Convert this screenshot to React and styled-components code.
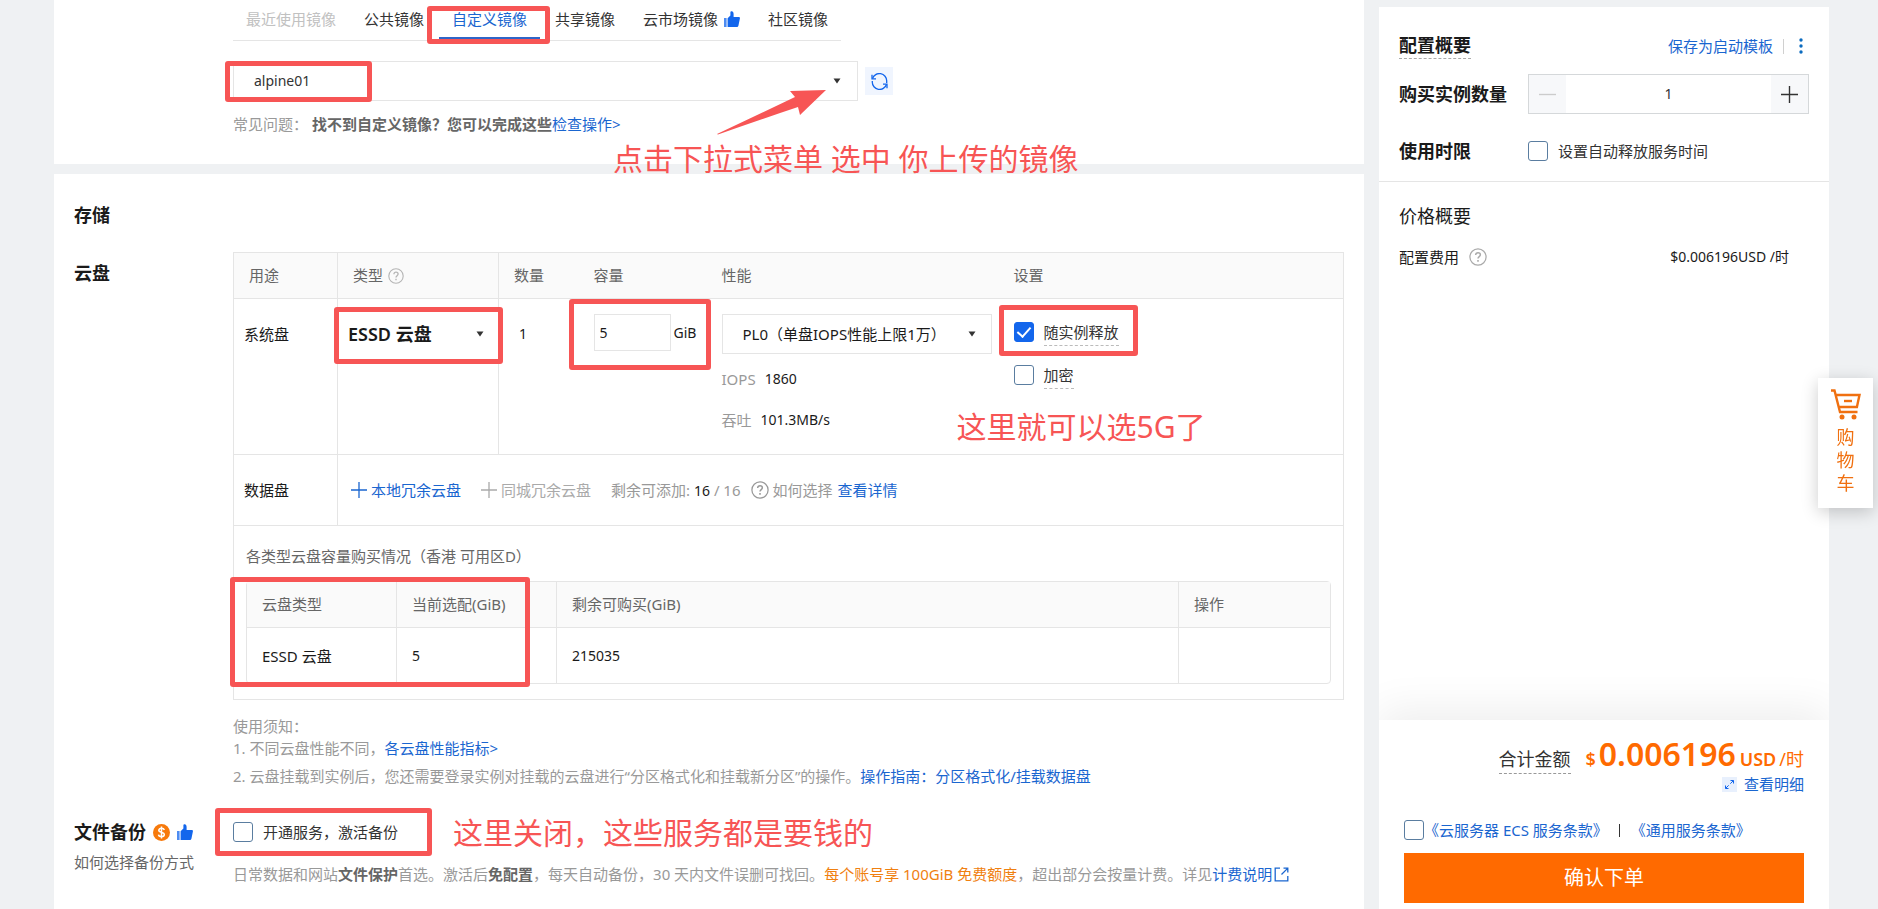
import React, { useState } from "react";
import styled, { createGlobalStyle, ThemeProvider } from "styled-components";

const theme = {
  bg: "#eff1f3",
  panel: "#ffffff",
  soft: "#fafafa",
  border: "#e5e5e5",
  text: "#333333",
  strong: "#1a1a1a",
  textMid: "#666666",
  textSoft: "#999999",
  link: "#1a66d0",
  primary: "#1366ec",
  orange: "#ff6a00",
  mark: "#f75555",
};

const GlobalStyle = createGlobalStyle`
  * {
    box-sizing: border-box;
  }
  body {
    margin: 0;
    background: ${theme.bg};
    color: ${theme.text};
    font-family: "Noto Sans", "Noto Sans CJK SC", sans-serif;
    font-size: 15px;
    line-height: 24px;
  }
  button, input, select {
    font: inherit;
    color: inherit;
  }
  h2, h3, p {
    margin: 0;
  }
`;

const Page = styled.div`
  display: flex;
  gap: 15px;
  min-height: 100vh;
  padding: 0 49px 0 54px;
`;

const Main = styled.main`
  flex: 1;
  min-width: 0;
  display: flex;
  flex-direction: column;
  gap: 10px;
`;

const Panel = styled.section`
  padding: ${({ $pad }) => $pad};
  flex: ${({ $grow }) => ($grow ? 1 : "none")};
  background: ${({ theme }) => theme.panel};
`;

const Row = styled.div`
  display: grid;
  grid-template-columns: 159px minmax(0, 1fr);
  margin-top: ${({ $top }) => $top || 0}px;
`;

const Heading = styled.h3`
  display: flex;
  align-items: center;
  gap: 7px;
  font-size: 18px;
  font-weight: ${({ $light }) => ($light ? 400 : 700)};
  line-height: 24px;
  color: ${({ theme }) => theme.strong};
`;

const DottedHeading = styled(Heading)`
  padding-bottom: 1px;
  border-bottom: 1px dashed #aaa;
`;

const DiskHeading = styled(Heading)`
  padding-top: 9px;
`;

const Link = styled.a`
  color: ${({ theme }) => theme.link};
  text-decoration: none;
`;

const Latin = styled.span`
  font-size: 14px;
  color: ${({ theme }) => theme.strong};
`;

/* red hand-drawn notes that lie over the form */
const Mark = styled.span`
  position: absolute;
  inset: ${({ $inset }) => $inset};
  width: ${({ $w }) => ($w ? `${$w}px` : "auto")};
  height: ${({ $h }) => ($h ? `${$h}px` : "auto")};
  border: 5px solid ${({ theme }) => theme.mark};
  border-radius: 3px;
  pointer-events: none;
`;

const Note = styled.span`
  position: absolute;
  left: ${({ $left }) => $left}px;
  top: ${({ $top }) => $top}px;
  z-index: 2;
  color: ${({ theme }) => theme.mark};
  font-size: 30px;
  line-height: 40px;
  white-space: nowrap;
  pointer-events: none;
`;

const Arrow = styled.svg`
  position: absolute;
  left: 483px;
  top: 28px;
  z-index: 2;
  pointer-events: none;
`;

const Tabs = styled.nav`
  display: inline-flex;
  gap: 2px;
  border-bottom: 1px solid ${({ theme }) => theme.border};
`;

const Tab = styled.button`
  position: relative;
  display: flex;
  align-items: center;
  gap: 6px;
  height: 40px;
  padding: 0 13px 2px;
  border: 0;
  background: none;
  white-space: nowrap;
  color: ${({ theme, $active, disabled }) => ($active ? theme.link : disabled ? "#c1c1c1" : theme.text)};
  box-shadow: ${({ $active }) => ($active ? "inset 0 -3px #2f65c8" : "none")};
`;

const ImageField = styled.div`
  position: relative;
  display: flex;
  align-items: center;
  gap: 7px;
  margin: 20px 0 13px;
`;

const SelectBox = styled.div`
  display: flex;
  align-items: center;
  position: relative;
  width: ${({ $w }) => ($w ? `${$w}px` : "auto")};

  svg {
    position: absolute;
    right: ${({ $caret }) => $caret || 16}px;
    pointer-events: none;
  }
`;

const Select = styled.select`
  appearance: none;
  width: 100%;
  height: 40px;
  padding: 0 30px 0 20px;
  border: 1px solid ${({ theme }) => theme.border};
  border-radius: 0;
  background: #fff;
`;

const ImageSelect = styled(Select)`
  font-size: 14px;
`;

const TypeSelect = styled(Select)`
  padding-left: 10px;
  border: 0;
  background: none;
  font-size: 18px;
  font-weight: 600;
`;

const RefreshButton = styled.button`
  display: grid;
  place-items: center;
  width: 28px;
  height: 28px;
  padding: 0;
  border: 0;
  background: #f0f5fe;
  color: ${({ theme }) => theme.primary};
`;

const Hint = styled.p`
  line-height: ${({ $tight }) => ($tight ? 20 : 24)}px;
  margin-top: ${({ $top }) => $top || 0}px;
  color: ${({ theme }) => theme.textSoft};

  b {
    color: ${({ theme }) => theme.textMid};
  }
  em {
    font-style: normal;
    color: #f08010;
  }
  svg {
    margin-left: 2px;
    vertical-align: -2px;
  }
`;

const DiskTable = styled.table`
  width: 100%;
  table-layout: fixed;
  border-collapse: collapse;
  border: 1px solid ${({ theme }) => theme.border};
`;

const Th = styled.th`
  height: 46px;
  padding: 0 15px 2px;
  border-bottom: 1px solid ${({ theme }) => theme.border};
  border-right: ${({ $line, theme }) => ($line ? `1px solid ${theme.border}` : 0)};
  background: ${({ theme }) => theme.soft};
  color: ${({ theme }) => theme.textMid};
  font-weight: 400;
  text-align: left;

  svg {
    margin-left: 5px;
    vertical-align: -3px;
    color: #b5b5b5;
  }
`;

const Td = styled.td`
  height: ${({ $h }) => $h}px;
  padding: ${({ $pad }) => $pad || "15px 15px 0"};
  border-bottom: 1px solid ${({ theme }) => theme.border};
  border-right: ${({ $line, theme }) => ($line ? `1px solid ${theme.border}` : 0)};
  vertical-align: ${({ $middle }) => ($middle ? "middle" : "top")};
  color: ${({ theme }) => theme.strong};
`;

const CellLine = styled.div`
  display: flex;
  align-items: center;
  min-height: 40px;
`;

const Capacity = styled.label`
  position: relative;
  display: flex;
  align-items: center;
  gap: 3px;
  width: 102px;
  height: 37px;
  font-size: 14px;
`;

const CapacityInput = styled.input`
  width: 77px;
  height: 37px;
  padding: 0 5px;
  border: 1px solid ${({ theme }) => theme.border};
`;

const Stat = styled.p`
  display: flex;
  gap: 9px;
  margin-top: ${({ $top }) => $top}px;
  color: ${({ theme }) => theme.textSoft};
`;

const Settings = styled.div`
  position: relative;
  display: flex;
  flex-direction: column;
  align-items: flex-start;
  gap: 19px;
  padding-top: 8px;
`;

const CheckLabel = styled.label`
  position: relative;
  display: inline-flex;
  gap: 10px;
  line-height: 20px;
  color: ${({ theme }) => theme.text};
`;

const Dotted = styled.span`
  padding-bottom: 3px;
  border-bottom: 1px dashed #bbb;
`;

const Checkbox = styled.input.attrs({ type: "checkbox" })`
  appearance: none;
  display: grid;
  place-items: center;
  flex: none;
  width: 20px;
  height: 20px;
  margin: 0;
  border: 1px solid #5a7da0;
  border-radius: 3px;
  background: #fff;

  &:checked {
    border-color: ${({ theme }) => theme.primary};
    background: ${({ theme }) => theme.primary};
  }
  &:checked::after {
    content: "";
    width: 6px;
    height: 11px;
    margin-bottom: 3px;
    border: solid #fff;
    border-width: 0 2px 2px 0;
    transform: rotate(42deg);
  }
`;

const DataDisks = styled.div`
  display: flex;
  align-items: center;
  color: ${({ theme }) => theme.textSoft};
`;

const AddButton = styled.button`
  display: flex;
  align-items: center;
  gap: 4px;
  margin-right: 20px;
  padding: 0;
  border: 0;
  background: none;
  color: ${({ theme, disabled }) => (disabled ? "#aaaaaa" : theme.link)};
`;

const HowTo = styled.span`
  display: flex;
  align-items: center;
  gap: 4px;
  margin: 0 5px 0 10px;
`;

const QuotaTitle = styled.p`
  margin-bottom: 13px;
  color: ${({ theme }) => theme.textMid};
`;

const QuotaBox = styled.div`
  position: relative;
  border: 1px solid ${({ theme }) => theme.border};
  border-radius: 4px;
`;

const QuotaTable = styled.table`
  width: 100%;
  table-layout: fixed;
  border-collapse: separate;
  border-spacing: 0;

  th:last-child, td:last-child {
    border-right: 0;
  }
  td {
    border-bottom: 0;
  }
`;

const SubLink = styled(Link)`
  display: block;
  margin-top: 6px;
  color: ${({ theme }) => theme.textMid};
`;

const BackupBody = styled.div`
  display: flex;
  flex-direction: column;
  align-items: flex-start;
  padding-top: 2px;
`;

const Aside = styled.aside`
  position: sticky;
  top: 0;
  display: flex;
  flex-direction: column;
  width: 450px;
  height: 100vh;
  border-top: 7px solid ${({ theme }) => theme.bg};
  background: ${({ theme }) => theme.panel};
`;

const Config = styled.div`
  display: flex;
  flex-direction: column;
  padding: 26px 20px 10px;
  border-bottom: 1px solid ${({ theme }) => theme.border};
`;

const Split = styled.div`
  display: flex;
  align-items: center;
  justify-content: space-between;
`;

const Actions = styled.div`
  display: flex;
  align-items: center;
  gap: 10px;
`;

const Divider = styled.span`
  width: 1px;
  height: 15px;
  background: #d0d0d0;
`;

const MoreButton = styled.button`
  display: flex;
  padding: 0 6px 0 5px;
  border: 0;
  background: none;
  color: #0b6bbf;
`;

const Field = styled.div`
  display: grid;
  grid-template-columns: 129px 1fr;
  align-items: center;
  min-height: 40px;
  margin-top: ${({ $top }) => $top}px;
`;

const Stepper = styled.div`
  display: flex;
  height: 40px;
  border: 1px solid #d5d8da;

  button {
    display: grid;
    place-items: center;
    width: 37px;
    padding: 0;
    border: 0;
    background: #f7f8fa;
  }
  button:disabled {
    color: #cccccc;
  }
  input {
    flex: 1;
    min-width: 0;
    border: 0;
    text-align: center;
    font-size: 14px;
  }
`;

const Price = styled.div`
  flex: 1;
  padding: 22px 20px 0;
`;

const FeeRow = styled(Split)`
  margin-top: 17px;
  padding-right: 20px;
  color: ${({ theme }) => theme.strong};
`;

const FeeName = styled.span`
  display: flex;
  align-items: center;
  gap: 10px;

  svg {
    color: #aaa;
  }
`;

const Checkout = styled.div`
  padding: 14px 25px 6px;
  background: #fff;
  box-shadow: 0 -10px 40px rgba(0, 0, 0, 0.07);
  clip-path: inset(-60px 0 0 0);
`;

const Total = styled.div`
  display: flex;
  align-items: baseline;
  justify-content: flex-end;
  height: 40px;
  line-height: 40px;
  color: ${({ theme }) => theme.orange};
  font-weight: 600;
`;

const TotalLabel = styled.span`
  margin-right: 15px;
  border-bottom: 1px dashed #999;
  color: ${({ theme }) => theme.text};
  font-size: 18px;
  font-weight: 400;
  line-height: 28px;
`;

const Amount = styled.span`
  margin: 0 4px 0 3px;
  font-size: 32px;
`;

const Unit = styled.span`
  margin-left: ${({ $light }) => ($light ? 3 : 0)}px;
  font-size: 18px;
  font-weight: ${({ $light }) => ($light ? 400 : 600)};
`;

const Detail = styled.div`
  display: flex;
  align-items: center;
  justify-content: flex-end;
  gap: 7px;
  height: 20px;
`;

const ExpandIcon = styled.span`
  display: grid;
  place-items: center;
  width: 15px;
  height: 15px;
  background: #e8f0fd;
  color: ${({ theme }) => theme.primary};
`;

const Terms = styled.div`
  display: flex;
  align-items: center;
  margin: 26px 0 13px;
  line-height: 20px;

  i {
    width: 1px;
    height: 13px;
    margin: 0 11px;
    background: #333;
  }
`;

const Submit = styled.button`
  width: 100%;
  height: 50px;
  border: 0;
  background: ${({ theme }) => theme.orange};
  color: #fff;
  font-size: 20px;
`;

const Cart = styled.button`
  position: fixed;
  right: 5px;
  top: 378px;
  z-index: 5;
  display: flex;
  flex-direction: column;
  align-items: center;
  gap: 6px;
  width: 55px;
  height: 130px;
  padding: 11px 0 0;
  border: 0;
  background: #fff;
  box-shadow: 0 4px 16px rgba(0, 0, 0, 0.2);
  color: #f07010;
  font-size: 18px;
  line-height: 23px;

  span {
    width: 18px;
  }
`;

const Caret = () => (
  <svg width="8" height="6" viewBox="0 0 8 6" fill="#333">
    <path d="M0.5 0.5h7L4 5.5z" />
  </svg>
);

const Question = ({ size = 16 }) => (
  <svg width={size} height={size} viewBox="0 0 16 16" fill="none" stroke="currentColor" strokeWidth="1.1">
    <circle cx="8" cy="8" r="7.2" />
    <path d="M5.9 6.3c0-1.3.9-2.1 2.1-2.1s2.1.8 2.1 1.9c0 1.5-2.1 1.6-2.1 3.3" strokeWidth="1.3" />
    <path d="M8 10.7v1.5" strokeWidth="1.4" />
  </svg>
);

const Thumb = () => (
  <svg width="16" height="17" viewBox="0 0 16 17" fill="#1366ec">
    <path d="M0 7h2.6v9H0z" fillOpacity="0.75" />
    <path d="M3.6 7.2L6.4 4.6V1.2C6.4.4 7 .2 7.5.2 9 .2 9.6 1.5 9.6 3v3h5.2c.8 0 1.3.6 1.1 1.4l-1.5 7.4c-.2.8-.7 1.2-1.4 1.2H3.6z" />
  </svg>
);

const Coin = () => (
  <svg width="17" height="17" viewBox="0 0 17 17">
    <circle cx="8.5" cy="8.5" r="8.5" fill="#f77a0c" />
    <path
      d="M11.3 6C11 4.9 10 4.3 8.5 4.3c-1.6 0-2.7.8-2.7 2 0 2.9 5.5 1.3 5.5 4.2 0 1.3-1.2 2.1-2.8 2.1-1.7 0-2.8-.7-3-2M8.5 2.5v12"
      fill="none"
      stroke="#fff"
      strokeWidth="1.5"
    />
  </svg>
);

const Plus = ({ size = 16, minus }) => (
  <svg width={size} height={size} viewBox="0 0 16 16" fill="none" stroke="currentColor" strokeWidth="1.3">
    <path d={minus ? "M0 8h16" : "M0 8h16M8 0v16"} />
  </svg>
);

const Refresh = () => (
  <svg width="17" height="17" viewBox="0 0 17 17" fill="none" stroke="currentColor" strokeWidth="1.3">
    <path d="M1.5 5.5A7.3 7.3 0 0 1 15.7 8v2M15.5 11.5A7.3 7.3 0 0 1 1.3 9V8" />
    <path d="M1 1.8v4h4M16 15.2v-4h-4" />
  </svg>
);

const External = () => (
  <svg width="15" height="15" viewBox="0 0 15 15" fill="none" stroke="currentColor" strokeWidth="1.3">
    <path d="M6 1.2H1.2v12.6h12.6V9M9.5 1.2h4.300v4.300M13.600 1.400L7.500 7.500" />
  </svg>
);

const Expand = () => (
  <svg width="9" height="9" viewBox="0 0 9 9" fill="none" stroke="currentColor" strokeWidth="1">
    <path d="M5.5.5h3v3M8.3.7l-3 3M3.5 8.5h-3v-3M.7 8.3l3-3" />
  </svg>
);

const CartIcon = () => (
  <svg width="30" height="31" viewBox="0 0 30 31" fill="none" stroke="currentColor" strokeWidth="2.4">
    <path d="M0 1.5h3.5L9 23h17.5M4.8 6h23.7l-2.6 12H8" />
    <path d="M13 12h8" />
    <circle cx="11" cy="28" r="2.5" fill="currentColor" stroke="none" />
    <circle cx="23" cy="28" r="2.5" fill="currentColor" stroke="none" />
  </svg>
);

const tabs = [
  { name: "最近使用镜像", disabled: true },
  { name: "公共镜像" },
  { name: "自定义镜像", marked: true },
  { name: "共享镜像" },
  { name: "云市场镜像", hot: true },
  { name: "社区镜像" },
];

const ImagePanel = () => {
  const [active, setActive] = useState("自定义镜像");
  return (
    <Panel $pad="0 20px 30px 179px">
      <Tabs>
        {tabs.map((tab) => (
          <Tab
            key={tab.name}
            disabled={tab.disabled}
            $active={tab.name === active}
            onClick={() => setActive(tab.name)}
          >
            {tab.name}
            {tab.hot && <Thumb />}
            {tab.marked && <Mark $inset="6px -10px -4px -12px" />}
          </Tab>
        ))}
      </Tabs>
      <ImageField>
        <SelectBox $w={625} $caret={17}>
          <ImageSelect aria-label="镜像">
            <option>alpine01</option>
          </ImageSelect>
          <Caret />
          <Mark $inset="0 auto auto -8px" $w={147} $h={41} />
        </SelectBox>
        <RefreshButton aria-label="刷新">
          <Refresh />
        </RefreshButton>
        <Arrow width="112" height="48" viewBox="0 0 112 48">
          <path d="M1 45L79 8L74 2L110 1L84 26L82 18Q40 32 2 45.5Z" fill={theme.mark} />
        </Arrow>
        <Note $left={380} $top={78}>点击下拉式菜单 选中 你上传的镜像</Note>
      </ImageField>
      <Hint $tight>
        常见问题： <b>找不到自定义镜像？您可以完成这些</b>
        <Link href="#check">检查操作&gt;</Link>
      </Hint>
    </Panel>
  );
};

const SystemDiskRow = () => (
  <tr>
    <Td $h={156} $pad="15px 10px 0" $line>
      <CellLine>系统盘</CellLine>
    </Td>
    <Td $pad="15px 0 0" $line>
      <SelectBox $caret={14}>
        <TypeSelect aria-label="类型">
          <option>ESSD 云盘</option>
        </TypeSelect>
        <Caret />
        <Mark $inset="-7px -5px -10px -4px" />
      </SelectBox>
    </Td>
    <Td $pad="15px 20px 0">
      <CellLine>
        <Latin>1</Latin>
      </CellLine>
    </Td>
    <Td>
      <Capacity>
        <CapacityInput aria-label="容量" defaultValue="5" />
        GiB
        <Mark $inset="-15px -15px -19px -25px" />
      </Capacity>
    </Td>
    <Td>
      <SelectBox $w={270}>
        <Select aria-label="性能">
          <option>PL0（单盘IOPS性能上限1万）</option>
        </Select>
        <Caret />
      </SelectBox>
      <Stat $top={13}>
        <span>IOPS</span>
        <Latin>1860</Latin>
      </Stat>
      <Stat $top={17}>
        <span>吞吐</span>
        <Latin>101.3MB/s</Latin>
      </Stat>
    </Td>
    <Td>
      <Settings>
        <CheckLabel>
          <Checkbox defaultChecked />
          <Dotted>随实例释放</Dotted>
          <Mark $inset="-17px -19px -10px -15px" />
        </CheckLabel>
        <CheckLabel>
          <Checkbox />
          <Dotted>加密</Dotted>
        </CheckLabel>
        <Note $left={-57} $top={93}>这里就可以选5G了</Note>
      </Settings>
    </Td>
  </tr>
);

const Quota = () => (
  <>
    <QuotaTitle>各类型云盘容量购买情况（香港 可用区D）</QuotaTitle>
    <QuotaBox>
      <QuotaTable>
        <colgroup>
          <col width="150" />
          <col width="160" />
          <col />
          <col width="151" />
        </colgroup>
        <thead>
          <tr>
            <Th $line>云盘类型</Th>
            <Th $line>当前选配(GiB)</Th>
            <Th $line>剩余可购买(GiB)</Th>
            <Th $line>操作</Th>
          </tr>
        </thead>
        <tbody>
          <tr>
            <Td $h={55} $pad="0 15px" $middle $line>ESSD 云盘</Td>
            <Td $pad="0 15px" $middle $line><Latin>5</Latin></Td>
            <Td $pad="0 15px" $middle $line><Latin>215035</Latin></Td>
            <Td $pad="0 15px" $middle $line />
          </tr>
        </tbody>
      </QuotaTable>
      <Mark $inset="-5px auto auto -17px" $w={300} $h={110} />
    </QuotaBox>
  </>
);

const StoragePanel = () => (
  <Panel $pad="29px 20px 20px" $grow>
    <Heading as="h2">存储</Heading>
    <Row $top={25}>
      <div>
        <DiskHeading>云盘</DiskHeading>
      </div>
      <div>
        <DiskTable>
          <colgroup>
            <col width="104" />
            <col width="161" />
            <col width="80" />
            <col width="128" />
            <col width="292" />
            <col />
          </colgroup>
          <thead>
            <tr>
              <Th $line>用途</Th>
              <Th $line>类型<Question /></Th>
              <Th>数量</Th>
              <Th>容量</Th>
              <Th>性能</Th>
              <Th>设置</Th>
            </tr>
          </thead>
          <tbody>
            <SystemDiskRow />
            <tr>
              <Td $h={71} $pad="0 10px" $middle $line>数据盘</Td>
              <Td colSpan={5} $pad="0 13px" $middle>
                <DataDisks>
                  <AddButton><Plus />本地冗余云盘</AddButton>
                  <AddButton disabled><Plus />同城冗余云盘</AddButton>
                  <span>剩余可添加: <Latin>16</Latin> / 16</span>
                  <HowTo><Question size={18} />如何选择</HowTo>
                  <Link href="#detail">查看详情</Link>
                </DataDisks>
              </Td>
            </tr>
            <tr>
              <Td colSpan={6} $pad="18px 12px 15px">
                <Quota />
              </Td>
            </tr>
          </tbody>
        </DiskTable>
        <Hint $tight $top={16}>使用须知：</Hint>
        <Hint>
          1. 不同云盘性能不同，<Link href="#perf">各云盘性能指标&gt;</Link>
        </Hint>
        <Hint $top={4}>
          2. 云盘挂载到实例后，您还需要登录实例对挂载的云盘进行“分区格式化和挂载新分区”的操作。
          <Link href="#guide">操作指南：分区格式化/挂载数据盘</Link>
        </Hint>
      </div>
    </Row>
    <Row $top={32}>
      <div>
        <Heading>文件备份<Coin /><Thumb /></Heading>
        <SubLink href="#backup">如何选择备份方式</SubLink>
      </div>
      <BackupBody>
        <CheckLabel>
          <Checkbox />
          开通服务，激活备份
          <Mark $inset="-14px -34px -14px -18px" />
          <Note $left={220} $top={-9}>这里关闭，这些服务都是要钱的</Note>
        </CheckLabel>
        <Hint $top={20}>
          日常数据和网站<b>文件保护</b>首选。激活后<b>免配置</b>，每天自动备份，30 天内文件误删可找回。
          <em>每个账号享 100GiB 免费额度</em>，超出部分会按量计费。详见
          <Link href="#billing">计费说明<External /></Link>
        </Hint>
      </BackupBody>
    </Row>
  </Panel>
);

const Summary = () => {
  const [count, setCount] = useState(1);
  return (
    <Aside>
      <Config>
        <Split>
          <DottedHeading as="h2">配置概要</DottedHeading>
          <Actions>
            <Link href="#template">保存为启动模板</Link>
            <Divider />
            <MoreButton aria-label="更多">
              <svg width="4" height="16" viewBox="0 0 4 16" fill="currentColor">
                <circle cx="2" cy="2" r="1.7" />
                <circle cx="2" cy="8" r="1.7" />
                <circle cx="2" cy="14" r="1.7" />
              </svg>
            </MoreButton>
          </Actions>
        </Split>
        <Field $top={15}>
          <Heading as="label" htmlFor="count">购买实例数量</Heading>
          <Stepper>
            <button aria-label="减少" disabled={count === 1} onClick={() => setCount(count - 1)}>
              <Plus size={17} minus />
            </button>
            <input id="count" value={count} readOnly />
            <button aria-label="增加" onClick={() => setCount(count + 1)}>
              <Plus size={17} />
            </button>
          </Stepper>
        </Field>
        <Field $top={17}>
          <Heading>使用时限</Heading>
          <CheckLabel>
            <Checkbox />
            设置自动释放服务时间
          </CheckLabel>
        </Field>
      </Config>
      <Price>
        <Heading $light>价格概要</Heading>
        <FeeRow>
          <FeeName>配置费用<Question size={18} /></FeeName>
          <Latin>$0.006196USD /时</Latin>
        </FeeRow>
      </Price>
      <Checkout>
        <Total>
          <TotalLabel>合计金额</TotalLabel>
          <Unit>$</Unit>
          <Amount>0.006196</Amount>
          <Unit>USD</Unit>
          <Unit $light>/时</Unit>
        </Total>
        <Detail>
          <ExpandIcon><Expand /></ExpandIcon>
          <Link href="#bill">查看明细</Link>
        </Detail>
        <Terms>
          <Checkbox aria-label="同意服务条款" />
          <Link href="#ecs">《云服务器 ECS 服务条款》</Link>
          <i />
          <Link href="#common">《通用服务条款》</Link>
        </Terms>
        <Submit>确认下单</Submit>
      </Checkout>
    </Aside>
  );
};

const App = () => {
  return (
    <ThemeProvider theme={theme}>
      <GlobalStyle />
      <Page>
        <Main>
          <ImagePanel />
          <StoragePanel />
        </Main>
        <Summary />
      </Page>
      <Cart>
        <CartIcon />
        <span>购物车</span>
      </Cart>
    </ThemeProvider>
  );
};

export default App;
